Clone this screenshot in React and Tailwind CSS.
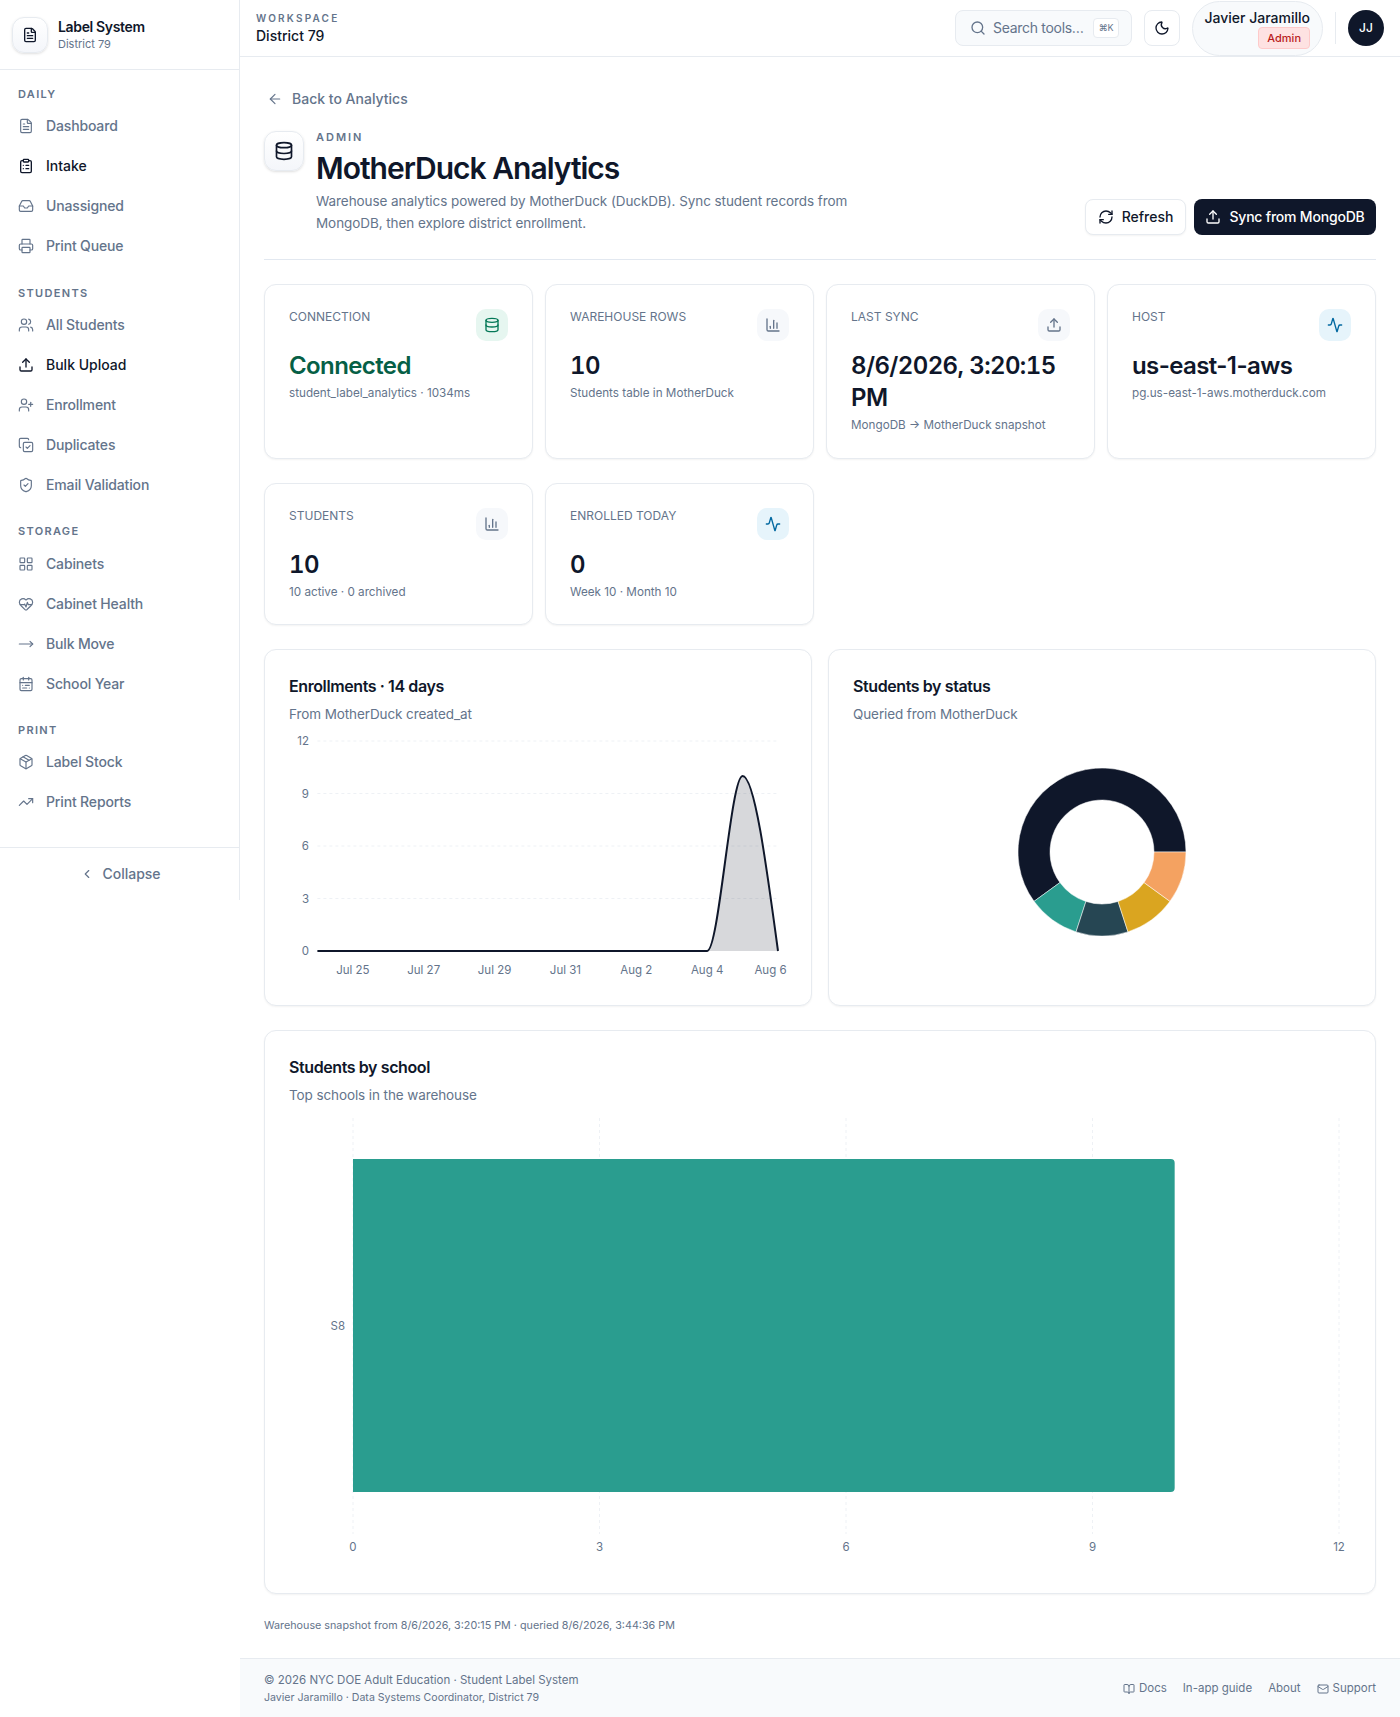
import {
  Activity, ArrowLeft, BookOpen, CalendarRange, ChartColumn, ChevronLeft, ClipboardList, CopyCheck, Database,
  FileText, HeartPulse, Inbox, LayoutGrid, Mail, Moon, MoveRight, Package, Printer, RefreshCw, Search,
  ShieldCheck, TrendingUp, Upload, UserPlus, Users,
} from 'lucide-react';

const navSections = [
  {
    title: 'DAILY',
    items: [
      { label: 'Dashboard', icon: FileText },
      { label: 'Intake', icon: ClipboardList, active: true },
      { label: 'Unassigned', icon: Inbox },
      { label: 'Print Queue', icon: Printer },
    ],
  },
  {
    title: 'STUDENTS',
    items: [
      { label: 'All Students', icon: Users },
      { label: 'Bulk Upload', icon: Upload, active: true },
      { label: 'Enrollment', icon: UserPlus },
      { label: 'Duplicates', icon: CopyCheck },
      { label: 'Email Validation', icon: ShieldCheck },
    ],
  },
  {
    title: 'STORAGE',
    items: [
      { label: 'Cabinets', icon: LayoutGrid },
      { label: 'Cabinet Health', icon: HeartPulse },
      { label: 'Bulk Move', icon: MoveRight },
      { label: 'School Year', icon: CalendarRange },
    ],
  },
  {
    title: 'PRINT',
    items: [
      { label: 'Label Stock', icon: Package },
      { label: 'Print Reports', icon: TrendingUp },
    ],
  },
];

const tones = {
  green: 'bg-[#e6f6f0] text-[#047857]',
  slate: 'bg-[#f6f8fb] text-[#64748b]',
  sky: 'bg-[#e6f4fb] text-[#0369a1]',
};

const stats = [
  { label: 'Connection', value: 'Connected', sub: 'student_label_analytics · 1034ms', icon: Database, tone: 'green', valueClass: 'text-[#065f46]' },
  { label: 'Warehouse rows', value: '10', sub: 'Students table in MotherDuck', icon: ChartColumn, tone: 'slate', valueClass: 'text-[#0f172a] tabular-nums' },
  { label: 'Last sync', value: '8/6/2026, 3:20:15 PM', sub: 'MongoDB → MotherDuck snapshot', icon: Upload, tone: 'slate', valueClass: 'text-[#0f172a] tabular-nums' },
  { label: 'Host', value: 'us-east-1-aws', sub: 'pg.us-east-1-aws.motherduck.com', icon: Activity, tone: 'sky' },
  { label: 'Students', value: '10', sub: '10 active · 0 archived', icon: ChartColumn, tone: 'slate', valueClass: 'text-[#0f172a] tabular-nums' },
  { label: 'Enrolled today', value: '0', sub: 'Week 10 · Month 10', icon: Activity, tone: 'sky', valueClass: 'text-[#0f172a] tabular-nums' },
];

function Sidebar() {
  return (
    <aside className="flex h-[900px] w-60 shrink-0 flex-col border-r border-[#e7ebf0] bg-white">
      <div className="flex h-[70px] items-center gap-[10px] border-b border-[#e7ebf0] px-3">
        <div className="flex h-9 w-9 items-center justify-center rounded-xl border border-[#e7ebf0] bg-linear-to-b from-white to-[#f4f6fa] text-[#0f172a] shadow-sm">
          <FileText size={16} />
        </div>
        <div>
          <p className="text-sm leading-5 font-semibold tracking-[-0.35px] text-[#0f172a]">Label System</p>
          <p className="text-[11px] leading-[15px] text-[#64748b]">District 79</p>
        </div>
      </div>

      <nav className="flex-1 pt-4">
        {navSections.map((section, i) => (
          <div key={section.title} className={i > 0 ? 'mt-[18px]' : 'pb-px'}>
            <p className={`px-[18px] text-[11px] leading-4 font-semibold tracking-[0.12em] text-[#64748b] ${i > 0 ? 'mb-[4.5px]' : 'mb-[3.5px]'}`}>{section.title}</p>
            {section.items.map(({ label, icon: Icon, active }) => (
              <div
                key={label}
                className={`flex h-10 items-center gap-3 px-[18px] text-sm font-medium ${active ? 'text-[#0f172a]' : 'tracking-[-0.15px] text-[#64748b]'}`}
              >
                <Icon size={16} strokeWidth={active ? 2 : 1.75} />
                {label}
              </div>
            ))}
          </div>
        ))}
      </nav>

      <div className="flex h-[53px] items-center justify-center gap-2 border-t border-[#e7ebf0] pl-[2px] text-sm font-medium text-[#64748b]">
        <ChevronLeft size={14} />
        Collapse
      </div>
    </aside>
  );
}

function TopBar() {
  return (
    <header className="flex h-[57px] items-center justify-between border-b border-[#e7ebf0] bg-white pr-4 pl-4">
      <div>
        <p className="text-[10px] leading-4 font-semibold tracking-[0.22em] text-[#64748b]">WORKSPACE</p>
        <p className="text-sm leading-5 font-medium text-[#0f172a]">District 79</p>
      </div>
      <div className="flex items-center">
        <div className="flex h-9 w-[177px] items-center gap-[7px] rounded-lg border border-[#e7ebf0] bg-[#f8fafc] pr-3 pl-[14px] text-sm tracking-[-0.3px] text-[#64748b]">
          <Search size={16} className="shrink-0" />
          <span className="flex-1 whitespace-nowrap">Search tools…</span>
          <kbd className="flex h-5 w-[26px] shrink-0 items-center justify-center rounded border border-[#e7ebf0] bg-white font-[Inter,sans-serif] text-[9px] text-[#64748b]">⌘K</kbd>
        </div>
        <div className="ml-3 flex h-9 w-9 items-center justify-center rounded-lg border border-[#e7ebf0] bg-white text-[#0f172a]">
          <Moon size={16} />
        </div>
        <div className="ml-3 flex h-[55px] w-[131px] flex-col items-end justify-center rounded-full border border-[#e7ebf0] bg-[#f8fafc] pr-3">
          <p className="mt-px text-sm leading-5 font-medium text-[#0f172a]">Javier Jaramillo</p>
          <span className="-mt-px rounded border border-[#fecaca] bg-[#fee2e2] px-2 text-[11px] leading-5 font-medium text-[#b91c1c]">Admin</span>
        </div>
        <div className="mx-3 h-8 w-px bg-[#e7ebf0]" />
        <div className="flex h-9 w-9 items-center justify-center rounded-full bg-[#0f172a] text-xs font-medium text-white">JJ</div>
      </div>
    </header>
  );
}

function PageHeading() {
  return (
    <div className="border-b border-[#e2e8f0] pb-[25px]">
      <div className="mb-3 flex h-9 items-center gap-[9px] pl-[3px] text-sm font-medium text-[#64748b]">
        <ArrowLeft size={16} strokeWidth={1.75} />
        Back to Analytics
      </div>
      <div className="flex items-end justify-between">
        <div className="flex gap-3">
          <div className="mt-[2px] flex h-10 w-10 items-center justify-center rounded-xl border border-[#e7ebf0] bg-linear-to-b from-white to-[#f4f6fa] text-[#0f172a] shadow-sm">
            <Database size={20} />
          </div>
          <div>
            <p className="text-[11px] leading-4 font-semibold tracking-[0.18em] text-[#64748b]">ADMIN</p>
            <h1 className="mt-[5px] text-[30px] leading-9 font-semibold tracking-[-1px] text-[#0f172a]">MotherDuck Analytics</h1>
            <p className="mt-[4px] max-w-xl text-[13.5px] leading-[22px] tracking-[-0.07px] text-[#64748b]">
              Warehouse analytics powered by MotherDuck (DuckDB). Sync student records from MongoDB, then explore district enrollment.
            </p>
          </div>
        </div>
        <div className="-mb-px flex gap-2">
          <button className="flex h-9 w-[101px] items-center justify-center gap-2 rounded-lg border border-[#e7ebf0] bg-white text-sm font-medium text-[#0f172a] shadow-xs">
            <RefreshCw size={16} />
            Refresh
          </button>
          <button className="flex h-9 w-[182px] items-center justify-center gap-2 rounded-lg bg-[#0f172a] text-sm font-medium tracking-[-0.2px] text-white">
            <Upload size={16} />
            Sync from MongoDB
          </button>
        </div>
      </div>
    </div>
  );
}

function StatCard({ label, value, sub, icon: Icon, tone, valueClass = 'text-[#0f172a]' }) {
  return (
    <div className="rounded-xl border border-[#e7ebf0] bg-white p-6 shadow-xs">
      <div className="flex h-8 items-start justify-between">
        <p className="text-xs leading-4 text-[#64748b] uppercase">{label}</p>
        <div className={`flex h-8 w-8 items-center justify-center rounded-[10px] ${tones[tone]}`}>
          <Icon size={16} />
        </div>
      </div>
      <p className={`mt-[9px] text-2xl leading-8 font-semibold tracking-tight ${valueClass}`}>{value}</p>
      <p className="mt-[3px] text-[11.7px] leading-4 text-[#64748b]">{sub}</p>
    </div>
  );
}

function ChartCard({ title, sub, children }) {
  return (
    <div className="rounded-xl border border-[#e7ebf0] bg-white p-6 shadow-xs">
      <h2 className="text-base leading-6 font-semibold tracking-tight text-[#0f172a]">{title}</h2>
      <p className="mt-[6px] text-[13.5px] leading-5 tracking-[-0.1px] text-[#64748b]">{sub}</p>
      {children}
    </div>
  );
}

function EnrollmentChart() {
  const xs = (i) => 28.4 + (i * 460.6) / 13;
  const y = (v) => 227 - (v * 210) / 12;
  const ticks = [
    [1, 'Jul 25'],
    [3, 'Jul 27'],
    [5, 'Jul 29'],
    [7, 'Jul 31'],
    [9, 'Aug 2'],
    [11, 'Aug 4'],
  ];
  const dx = 35.43 / 3;
  const line = `M${xs(0)} ${y(0)} L${xs(11)} ${y(0)} C${xs(11) + dx} ${y(0)} ${xs(12) - dx} ${y(10)} ${xs(12)} ${y(10)} C${xs(12) + dx} ${y(10)} ${xs(13) - dx} ${y(5)} ${xs(13)} ${y(0)}`;
  return (
    <svg viewBox="0 0 498 257" className="block h-[257px] w-full">
      {[0, 3, 6, 9, 12].map((v) => (
        <g key={v}>
          {v > 0 && <line x1={xs(0)} x2={xs(13)} y1={y(v)} y2={y(v)} stroke="#eef1f5" strokeDasharray="3 3" />}
          <text x="20" y={y(v) + 4} textAnchor="end" fontSize="11.5" fill="#64748b">{v}</text>
        </g>
      ))}
      <path d={`${line} Z`} fill="#0f172a" fillOpacity="0.17" />
      <path d={line} fill="none" stroke="#0f172a" strokeWidth="2" />
      {ticks.map(([i, text]) => (
        <text key={text} x={xs(i)} y="250" textAnchor="middle" fontSize="11.5" fill="#64748b">{text}</text>
      ))}
      <text x="481.5" y="250" textAnchor="middle" fontSize="11.5" fill="#64748b">Aug 6</text>
    </svg>
  );
}

function StatusDonut() {
  const slices = [
    { share: 6, color: '#0f172a' },
    { share: 1, color: '#2a9d8f' },
    { share: 1, color: '#264653' },
    { share: 1, color: '#daa520' },
    { share: 1, color: '#f4a261' },
  ];
  const point = (r, deg) => {
    const a = (deg * Math.PI) / 180;
    return `${249 + r * Math.cos(a)} ${128 - r * Math.sin(a)}`;
  };
  let start = 0;
  return (
    <svg viewBox="0 0 498 257" className="block h-[257px] w-full">
      {slices.map(({ share, color }) => {
        const end = start + share * 36;
        const large = end - start > 180 ? 1 : 0;
        const d = `M${point(84, start)} A84 84 0 ${large} 0 ${point(84, end)} L${point(52, end)} A52 52 0 ${large} 1 ${point(52, start)} Z`;
        start = end;
        return <path key={color} d={d} fill={color} stroke="#fff" strokeWidth="0.5" />;
      })}
    </svg>
  );
}

function SchoolChart() {
  const x = (v) => 64 + (v * 986) / 12;
  return (
    <svg viewBox="0 0 1062 451" className="mt-[13px] block h-[451px] w-full">
      {[0, 3, 6, 9, 12].map((v) => (
        <g key={v}>
          <line x1={x(v)} x2={x(v)} y1="0" y2="416" stroke="#eef1f5" strokeDasharray="3 3" />
          <text x={x(v)} y="433" textAnchor="middle" fontSize="11.5" fill="#64748b">{v}</text>
        </g>
      ))}
      <path d={`M${x(0)} 41 H${x(10) - 4} a4 4 0 0 1 4 4 V370 a4 4 0 0 1 -4 4 H${x(0)} Z`} fill="#2a9d8f" />
      <text x="56" y="212" textAnchor="end" fontSize="11.5" fill="#64748b">S8</text>
    </svg>
  );
}

function Footer() {
  return (
    <footer className="flex h-[60px] items-center justify-between border-t border-[#e7ebf0] bg-[#f8fafc] px-6 text-[#64748b]">
      <div>
        <p className="text-[11.5px] leading-4">© 2026 NYC DOE Adult Education · Student Label System</p>
        <p className="mt-[2px] text-[10.6px] leading-4">Javier Jaramillo · Data Systems Coordinator, District 79</p>
      </div>
      <div className="flex items-center gap-4 text-[11.5px]">
        <span className="flex items-center gap-1"><BookOpen size={12} />Docs</span>
        <span>In-app guide</span>
        <span>About</span>
        <span className="flex items-center gap-1"><Mail size={12} />Support</span>
      </div>
    </footer>
  );
}

export default function App() {
  return (
    <div className="flex min-h-screen bg-white font-[Inter,sans-serif]">
      <Sidebar />
      <div className="flex min-w-0 flex-1 flex-col">
        <TopBar />
        <main className="flex-1 p-6">
          <PageHeading />
          <div className="mt-6 grid grid-cols-4 grid-rows-[175px_auto] gap-x-3 gap-y-6">
            {stats.map((stat) => (
              <StatCard key={stat.label} {...stat} />
            ))}
          </div>
          <div className="mt-6 grid grid-cols-2 gap-4">
            <ChartCard title="Enrollments · 14 days" sub="From MotherDuck created_at">
              <EnrollmentChart />
            </ChartCard>
            <ChartCard title="Students by status" sub="Queried from MotherDuck">
              <StatusDonut />
            </ChartCard>
          </div>
          <div className="mt-6">
            <ChartCard title="Students by school" sub="Top schools in the warehouse">
              <SchoolChart />
            </ChartCard>
          </div>
          <p className="mt-6 text-[10.75px] leading-4 text-[#64748b]">
            Warehouse snapshot from 8/6/2026, 3:20:15 PM · queried 8/6/2026, 3:44:36 PM
          </p>
        </main>
        <Footer />
      </div>
    </div>
  );
}
